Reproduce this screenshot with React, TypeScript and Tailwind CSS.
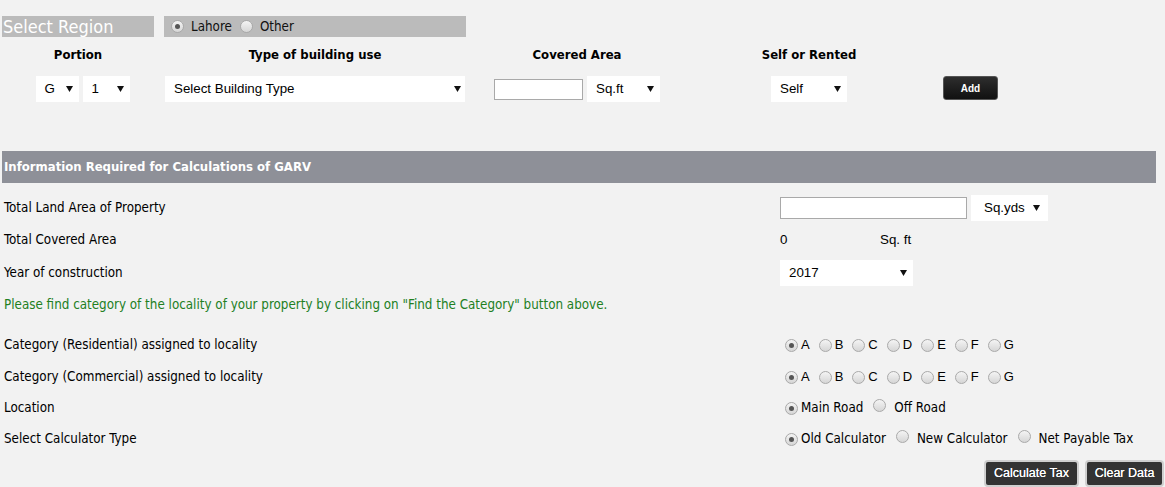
import React from "react";

const TAHOMA = { fontFamily: '"DejaVu Sans Condensed", "DejaVu Sans", sans-serif' };
const ARIAL = { fontFamily: '"Liberation Sans", Arial, sans-serif' };

function Arrow() {
  return (
    <svg width="7" height="6" viewBox="0 0 7 6" className="shrink-0">
      <path d="M0 0 L7 0 L3.5 6 Z" fill="#111" />
    </svg>
  );
}

function Select({ w, h = 26, label, pl = 9, pr = 8 }: { w: number; h?: number; label: string; pl?: number; pr?: number }) {
  return (
    <div
      className="flex items-center justify-between bg-white text-[13.33px] text-black"
      style={{ ...ARIAL, width: w, height: h, paddingLeft: pl, paddingRight: pr }}
    >
      <span>{label}</span>
      <Arrow />
    </div>
  );
}

function Radio({ checked = false }: { checked?: boolean }) {
  return (
    <span className="ml-[5px] mr-[3px] inline-flex h-[13px] w-[13px] shrink-0 items-center justify-center rounded-full border border-[#a9a9a9] bg-gradient-to-b from-[#f4f4f4] to-[#d6d6d6]">
      {checked && <span className="h-[5px] w-[5px] rounded-full bg-[#555]" />}
    </span>
  );
}

function Row({ h, label, children, green = false }: { h: number; label: string; children?: React.ReactNode; green?: boolean }) {
  return (
    <div className="flex items-center" style={{ height: h }}>
      <div className={`w-[780px] pl-[4px] text-[13.3px] ${green ? "text-[#22801f]" : "text-black"}`} style={TAHOMA}>
        {label}
      </div>
      <div className="flex items-center">{children}</div>
    </div>
  );
}

function Letters() {
  const l = ["A", "B", "C", "D", "E", "F", "G"];
  return (
    <div className="flex items-center text-[13px] text-black" style={ARIAL}>
      {l.map((x, i) => (
        <span key={x} className="flex items-center" style={{ marginRight: i < 6 ? 4 : 0 }}>
          <Radio checked={i === 0} />
          <span>{x}</span>
        </span>
      ))}
    </div>
  );
}

export default function App() {
  return (
    <div className="min-h-[487px] w-[1165px] bg-[#f2f2f2] pt-[16px]">
      {/* region row */}
      <div className="flex">
        <div
          className="ml-[2px] flex h-[21px] w-[152px] items-center bg-[#bbbbbb] pl-[1px] text-[18px] leading-none text-white"
          style={TAHOMA}
        >
          Select Region
        </div>
        <div className="ml-[10px] flex h-[21px] w-[302px] items-center bg-[#bbbbbb] text-[13.3px] text-[#111]" style={TAHOMA}>
          <span className="ml-[2px] flex items-center">
            <Radio checked />
          </span>
          <span className="ml-[4px]">Lahore</span>
          <span className="ml-[3px] flex items-center">
            <Radio />
          </span>
          <span className="ml-[4px]">Other</span>
        </div>
      </div>

      {/* portion rows */}
      <div className="mt-[10px] flex">
        <div className="flex w-[165px] flex-col items-center">
          <div className="flex h-[16px] items-center pr-[9px] text-[13px] font-bold text-black" style={TAHOMA}>
            Portion
          </div>
          <div className="mt-[13px] flex gap-[4px]">
            <Select w={43} label="G" pl={9} pr={6} />
            <Select w={47} label="1" pl={9} pr={6} />
          </div>
        </div>
        <div className="flex w-[300px] flex-col items-center">
          <div className="flex h-[16px] items-center text-[13px] font-bold text-black" style={TAHOMA}>
            Type of building use
          </div>
          <div className="mt-[13px]">
            <Select w={300} label="Select Building Type" pl={9} pr={4} />
          </div>
        </div>
        <div className="ml-[29px] flex w-[166px] flex-col items-center">
          <div className="flex h-[16px] items-center text-[13px] font-bold text-black" style={TAHOMA}>
            Covered Area
          </div>
          <div className="mt-[13px] flex items-center gap-[4px]">
            <div className="h-[21px] w-[89px] border border-[#a9a9a9] bg-white" />
            <Select w={73} label="Sq.ft" pl={9} pr={6} />
          </div>
        </div>
        <div className="ml-[101px] flex w-[96px] flex-col items-center">
          <div className="flex h-[16px] items-center whitespace-nowrap text-[13px] font-bold text-black" style={TAHOMA}>
            Self or Rented
          </div>
          <div className="mt-[13px]">
            <Select w={76} label="Self" pl={9} pr={6} />
          </div>
        </div>
        <div className="ml-[86px] flex flex-col">
          <div className="h-[16px]" />
          <button
            className="mt-[13px] flex h-[24px] w-[55px] items-center justify-center rounded-[3px] border border-[#555] bg-gradient-to-b from-[#2e2e2e] to-[#111] text-[10px] font-bold text-white"
            style={ARIAL}
          >
            Add
          </button>
        </div>
      </div>

      {/* header bar */}
      <div
        className="ml-[2px] mt-[49px] flex h-[32px] w-[1154px] items-center bg-[#8e9098] pl-[2px] text-[13px] font-bold text-white"
        style={TAHOMA}
      >
        Information Required for Calculations of GARV
      </div>

      <div className="mt-[9px]">
        <Row h={32} label="Total Land Area of Property">
          <div className="h-[22px] w-[187px] border border-[#a9a9a9] bg-white" />
          <div className="ml-[4px]">
            <Select w={77} label="Sq.yds" pl={13} pr={8} />
          </div>
        </Row>
        <Row h={32} label="Total Covered Area">
          <div className="flex text-[13.33px] text-black" style={ARIAL}>
            <span className="w-[100px]">0</span>
            <span>Sq. ft</span>
          </div>
        </Row>
        <Row h={34} label="Year of construction">
          <Select w={133} label="2017" pl={9} pr={6} />
        </Row>
        <Row h={30} label={'Please find category of the locality of your property by clicking on "Find the Category" button above.'} green />
        <div className="h-[5px]" />
        <Row h={40} label="Category (Residential) assigned to locality">
          <Letters />
        </Row>
        <Row h={24} label="Category (Commercial) assigned to locality">
          <Letters />
        </Row>
        <Row h={38} label="Location">
          <div className="flex items-center text-[13.3px] text-black" style={TAHOMA}>
            <Radio checked />
            <span>Main Road</span>
            <span className="ml-[5px]"><Radio /></span>
            <span className="ml-[5px]">Off Road</span>
          </div>
        </Row>
        <Row h={24} label="Select Calculator Type">
          <div className="flex items-center text-[13.3px] text-black" style={TAHOMA}>
            <Radio checked />
            <span>Old Calculator</span>
            <span className="ml-[5px]"><Radio /></span>
            <span className="ml-[5px]">New Calculator</span>
            <span className="ml-[5px]"><Radio /></span>
            <span className="ml-[5px]">Net Payable Tax</span>
          </div>
        </Row>
      </div>

      <div className="mt-[9px] flex justify-end gap-[6px] pr-[1px]">
        <button
          className="flex h-[27px] w-[95px] items-center justify-center rounded-[4px] border-2 border-[#cfcfcf] bg-[#333] text-[12.5px] text-white [text-shadow:0_0_0.4px_#fff]"
          style={ARIAL}
        >
          Calculate Tax
        </button>
        <button
          className="flex h-[27px] w-[79px] items-center justify-center rounded-[4px] border-2 border-[#cfcfcf] bg-[#333] text-[12.5px] text-white [text-shadow:0_0_0.4px_#fff]"
          style={ARIAL}
        >
          Clear Data
        </button>
      </div>
    </div>
  );
}
